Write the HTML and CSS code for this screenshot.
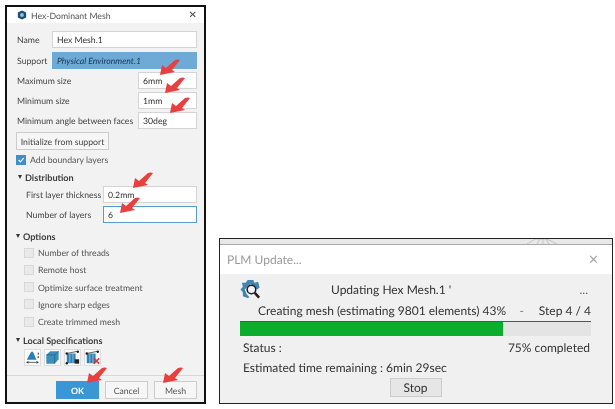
FILE: index.html
```html
<!DOCTYPE html>
<html lang="en">
<head>
  <meta charset="UTF-8">
  <meta name="viewport" content="width=device-width, initial-scale=1.0">
  <title>Hex-Dominant Mesh</title>
  <link rel="stylesheet" href="styles.css">
</head>
<body>
  <svg class="defs" width="0" height="0">
    <symbol id="red-arrow" viewBox="0 0 20 16">
      <path d="M0 16 L2 6 L6 9 L15 1 Q18 0 20 1 L12 11 L15 13 Z" fill="#e8403f"/>
    </symbol>
  </svg>

  <div class="mesh-dialog">
    <div class="title-bar">
      <svg class="title-icon" viewBox="0 0 12 12">
        <path d="M6 0.500 L11 3 V9 L6 11.500 L1 9 V3 Z" fill="#1f4e6e"/>
        <circle cx="6" cy="6" r="2.300" fill="#8fc3dd"/>
      </svg>
      <span class="title-text">Hex-Dominant Mesh</span>
      <span class="close">&#x2715;</span>
    </div>

    <div class="mesh-body">
      <div class="row name-row">
        <label>Name</label>
        <div class="field wide">Hex Mesh.1</div>
      </div>
      <div class="row name-row">
        <label>Support</label>
        <div class="field wide support">Physical Environment.1</div>
      </div>
      <div class="row">
        <label>Maximum size</label>
        <div class="field short">6mm</div>
      </div>
      <div class="row">
        <label>Minimum size</label>
        <div class="field short">1mm</div>
      </div>
      <div class="row">
        <label>Minimum angle between faces</label>
        <div class="field short">30deg</div>
      </div>

      <button class="btn init-btn">Initialize from support</button>

      <div class="check-row boundary">
        <span class="box checked">
          <svg viewBox="0 0 10 10"><path d="M2 5 L4.300 7.300 L8.200 2.700" fill="none" stroke="#fff" stroke-width="1.500"/></svg>
        </span>
        Add boundary layers
      </div>

      <div class="section-head dist-head"><span class="caret"></span>Distribution</div>
      <div class="row indent">
        <label>First layer thickness</label>
        <div class="field medium">0.2mm</div>
      </div>
      <div class="row indent">
        <label>Number of layers</label>
        <div class="field medium active">6</div>
      </div>

      <div class="section-head opt-head"><span class="caret"></span>Options</div>
      <div class="options">
        <div class="check-row"><span class="box"></span>Number of threads</div>
        <div class="check-row"><span class="box"></span>Remote host</div>
        <div class="check-row"><span class="box"></span>Optimize surface treatment</div>
        <div class="check-row"><span class="box"></span>Ignore sharp edges</div>
        <div class="check-row"><span class="box"></span>Create trimmed mesh</div>
      </div>

      <div class="section-head spec-head"><span class="caret"></span>Local Specifications</div>
      <div class="spec-icons">
        <span class="spec-icon">
          <svg viewBox="0 0 17 17">
            <path d="M2 11 L7 2 H9 L13 11 Z" fill="#2b7fb5"/>
            <path d="M2 14 H15 M2 14 L4 13 M2 14 L4 15 M15 14 L13 13 M15 14 L13 15" stroke="#222" stroke-width="0.800" fill="none"/>
            <path d="M15 3 V5 M15 7 V9" stroke="#222" stroke-width="1.200"/>
          </svg>
        </span>
        <span class="spec-icon">
          <svg viewBox="0 0 17 17">
            <path d="M1.500 5.500 L6 1.500 H15.500 V10.500 L11 15.500 H1.500 Z" fill="#3d8dbd"/>
            <path d="M1.500 5.500 H11 V15.500 M11 5.500 L15.500 1.500" stroke="#1d5a80" stroke-width="0.700" fill="none"/>
          </svg>
        </span>
        <span class="spec-icon">
          <svg viewBox="0 0 17 17">
            <path d="M2 4 H12 V15 H2 Z" fill="#2f83b4"/>
            <path d="M5.500 4 V15 M9 4 V15" stroke="#a9d4ea" stroke-width="0.800"/>
            <path d="M2 4 L14 1.500" stroke="#222" stroke-width="0.800"/>
            <circle cx="2" cy="4" r="1.400" fill="#222"/>
            <circle cx="2" cy="15" r="1.400" fill="#222"/>
            <circle cx="14.500" cy="2" r="1.400" fill="#222"/>
            <rect x="11" y="10.500" width="5" height="5" fill="#222"/>
          </svg>
        </span>
        <span class="spec-icon">
          <svg viewBox="0 0 17 17">
            <path d="M2 4 H12 V15 H2 Z" fill="#2f83b4"/>
            <path d="M5.500 4 V15 M9 4 V15" stroke="#a9d4ea" stroke-width="0.800"/>
            <path d="M2 4 L14 1.500" stroke="#222" stroke-width="0.800"/>
            <circle cx="2" cy="4" r="1.400" fill="#222"/>
            <circle cx="14.500" cy="2" r="1.400" fill="#222"/>
            <path d="M10 9.500 L16 15.500 M16 9.500 L10 15.500" stroke="#d8363a" stroke-width="1.800"/>
          </svg>
        </span>
      </div>
    </div>

    <div class="mesh-footer">
      <button class="btn ok">OK</button>
      <button class="btn">Cancel</button>
      <button class="btn">Mesh</button>
    </div>

    <svg class="arrow a1"><use href="#red-arrow"/></svg>
    <svg class="arrow a2"><use href="#red-arrow"/></svg>
    <svg class="arrow a3"><use href="#red-arrow"/></svg>
    <svg class="arrow a4"><use href="#red-arrow"/></svg>
    <svg class="arrow a5"><use href="#red-arrow"/></svg>
    <svg class="arrow a6"><use href="#red-arrow"/></svg>
    <svg class="arrow a7"><use href="#red-arrow"/></svg>
  </div>

  <div class="plm-dialog">
    <div class="plm-strip">
      <svg class="strip-mesh" viewBox="0 0 30 5">
        <path d="M0 5 L8 0 H20 L30 5 M10 5 L13 0 M16 5 V0 M22 5 L19 0" fill="none" stroke="#bbb" stroke-width="0.800"/>
      </svg>
    </div>
    <div class="plm-title">
      <span>PLM Update...</span>
      <span class="plm-close">&#x2715;</span>
    </div>
    <div class="plm-body">
      <div class="plm-head">
        <svg class="plm-icon" viewBox="0 0 22 22">
          <path d="M8 1 H14 L15 4 L19 3 L20.500 9 L18 11 L11 5 L5 11 L7 16 L10 19 L8 20 L3 18 L3 14 L0.500 11 L3 8 L2 4 L6 4 Z" fill="#3f86b0"/>
          <circle cx="12" cy="11" r="4.500" fill="#eef4f7" stroke="#1d1d1d" stroke-width="1.600"/>
          <path d="M15.500 14.500 L20 19.500" stroke="#1d1d1d" stroke-width="2.600"/>
        </svg>
        <span class="plm-updating">Updating Hex Mesh.1 '</span>
        <span class="plm-dots">...</span>
      </div>
      <div class="plm-step">
        <span class="plm-creating">Creating mesh (estimating 9801 elements) 43%</span>
        <span class="plm-dash">-</span>
        <span>Step 4 / 4</span>
      </div>
      <div class="progress"><div class="progress-fill"></div></div>
      <div class="plm-status">
        <span>Status :</span>
        <span>75% completed</span>
      </div>
      <div class="plm-time">Estimated time remaining : 6min 29sec</div>
      <div class="plm-actions"><button class="btn stop">Stop</button></div>
    </div>
  </div>
</body>
</html>
```

FILE: styles.css
```css
body {
  font-family: 'Lato', sans-serif;
  text-rendering: geometricPrecision;
  white-space: nowrap;
  background: white;
  margin: 0;
  padding: 5px 2px 5px 5px;
  width: 615px;
  height: 409px;
  box-sizing: border-box;
  display: flex;
  justify-content: space-between;
  align-items: flex-end;
  color: #444;
  overflow: hidden;
}
.defs {
  position: absolute;
}
.mesh-dialog {
  position: relative;
  width: 201px;
  height: 399px;
  box-sizing: border-box;
  border: 2px solid #111;
  background: #f2f2f2;
  font-size: 8.700px;
  display: flex;
  flex-direction: column;
  filter: blur(0.3px);
}
.title-bar {
  display: flex;
  align-items: center;
  height: 16px;
  background: white;
  padding: 0 7px 0 10px;
  color: #555;
}
.title-icon {
  width: 10px;
  height: 10px;
  margin-right: 4px;
}
.title-text {
  flex: 1;
}
.close {
  font-size: 10px;
  color: #444;
}
.mesh-body {
  flex: 1;
  padding: 8px 7px 0 10px;
}
.row {
  display: flex;
  align-items: center;
  justify-content: space-between;
  height: 17px;
  margin-bottom: 3px;
}
.name-row {
  margin-bottom: 3.500px;
}
.indent {
  padding-left: 9px;
}
.field {
  box-sizing: border-box;
  height: 17px;
  line-height: 15px;
  padding: 0 4px;
  background: white;
  border: 1px solid #d4d4d4;
  color: #333;
}
.wide {
  width: 145px;
}
.short {
  width: 59px;
}
.medium {
  width: 94px;
}
.support {
  background: #6fa9d6;
  border-color: #6fa9d6;
  color: #14385a;
  font-style: italic;
}
.active {
  border-color: #5a9bc9;
}
.btn {
  font-family: inherit;
  font-size: 8.700px;
  text-rendering: inherit;
  color: #555;
  background: #f6f6f6;
  border: 1px solid #ccc;
  padding: 0;
  height: 18px;
  width: 43px;
}
.init-btn {
  display: block;
  width: 93px;
  margin: 3px 0 0 -1px;
  color: #444;
}
.check-row {
  display: flex;
  align-items: center;
  height: 17.200px;
  color: #555;
}
.boundary {
  margin: 1px 0 0 -1px;
}
.box {
  box-sizing: border-box;
  width: 10px;
  height: 10px;
  margin-right: 4px;
  background: #e9e9e9;
  border: 1px solid #d8d8d8;
}
.checked {
  background: #3f8fca;
  border-color: #3f8fca;
  display: flex;
}
.checked svg {
  width: 100%;
}
.section-head {
  display: flex;
  align-items: center;
  height: 12px;
  font-size: 9.100px;
  font-weight: 700;
  color: #3c3c3c;
}
.caret {
  width: 0;
  height: 0;
  margin-right: 3px;
  border-left: 2.500px solid transparent;
  border-right: 2.500px solid transparent;
  border-top: 4px solid #333;
}
.dist-head {
  margin: 3px 0 3px 1px;
}
.opt-head {
  margin: 7px 0 2px -1px;
}
.options {
  padding-left: 7px;
}
.spec-head {
  margin: 4px 0 3px -1px;
}
.spec-icons {
  display: flex;
  gap: 3px;
  padding-left: 7px;
}
.spec-icon {
  box-sizing: border-box;
  width: 17px;
  height: 17px;
  background: #fbfbfb;
  border: 1px solid #ddd;
  display: flex;
}
.spec-icon svg {
  width: 100%;
}
.mesh-footer {
  display: flex;
  justify-content: flex-end;
  gap: 6px;
  border-top: 1px solid #d8d8d8;
  padding: 5px 7px 3px;
}
.ok {
  background: #3b96d6;
  border-color: #3b96d6;
  color: white;
  font-weight: 700;
}
.arrow {
  position: absolute;
  width: 20px;
  height: 16px;
}
.a1 { left: 153px; top: 52px; }
.a2 { left: 158px; top: 70px; }
.a3 { left: 163px; top: 90px; }
.a4 { left: 126px; top: 165px; }
.a5 { left: 113px; top: 190px; }
.a6 { left: 80px; top: 360px; }
.a7 { left: 156px; top: 360px; }

.plm-dialog {
  width: 394px;
  height: 166px;
  box-sizing: border-box;
  border: 1.500px solid #222;
  background: #f0f0f0;
  font-size: 12px;
  display: flex;
  flex-direction: column;
  filter: blur(0.3px);
}
.plm-strip {
  height: 5px;
  background: #e8e8e8;
  border-bottom: 1px solid #aaa;
  display: flex;
  justify-content: flex-end;
  padding-right: 55px;
}
.strip-mesh {
  width: 30px;
  height: 5px;
}
.plm-title {
  display: flex;
  justify-content: space-between;
  align-items: center;
  height: 29px;
  padding: 0 13px 0 7px;
  background: white;
  color: #9a9a9a;
}
.plm-close {
  font-size: 13px;
  color: #aaa;
}
.plm-body {
  flex: 1;
  padding: 4px 21px 0 20px;
  color: #333;
}
.plm-head {
  display: flex;
  align-items: center;
  height: 22px;
}
.plm-icon {
  width: 21px;
  height: 21px;
}
.plm-updating {
  margin-left: 70px;
  flex: 1;
}
.plm-dots {
  color: #666;
  margin-right: 3px;
}
.plm-step {
  display: flex;
  align-items: center;
  height: 20px;
  padding: 0 0 1px 18px;
}
.plm-creating {
  flex: 1;
}
.plm-dash {
  margin-right: 15px;
  color: #777;
}
.progress {
  height: 14px;
  background: #e4e4e4;
  border-top: 1px solid #555;
}
.progress-fill {
  width: 75%;
  height: 100%;
  background: #0bad2d;
}
.plm-status {
  display: flex;
  justify-content: space-between;
  padding: 0 1px 0 3px;
  margin-top: 4px;
  line-height: 16px;
}
.plm-time {
  padding-left: 3px;
  margin-top: 4px;
  line-height: 16px;
}
.plm-actions {
  display: flex;
  justify-content: center;
  margin-top: 2px;
}
.stop {
  width: 52px;
  height: 19px;
  font-size: 12px;
  color: #333;
  background: #e6e6e6;
}
```
